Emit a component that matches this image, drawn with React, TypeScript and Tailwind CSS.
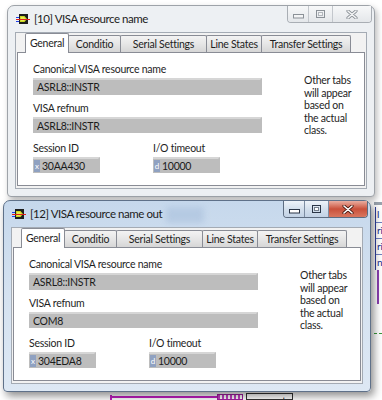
import React from "react";

type WinProps = {
  active?: boolean;
  title: string;
  refnum: string;
  session: string;
};

function LvIcon() {
  return (
    <svg width="14" height="10" viewBox="0 0 14 10" className="shrink-0">
      <rect x="3" y="0" width="9" height="10" fill="#1d1d1d" />
      <path d="M4 2 H8.5 L11 5 L8.5 8 H4 Z" fill="#c9d622" />
      <path d="M5 3 H8 L9.5 5 L8 7 H5 Z" fill="#e8ec50" />
      <line x1="0" y1="5.5" x2="14" y2="5.5" stroke="#e0201c" strokeWidth="1" />
      <line x1="0" y1="3.5" x2="3" y2="3.5" stroke="#2040e8" strokeWidth="1" />
      <line x1="0" y1="7.5" x2="3" y2="7.5" stroke="#2040e8" strokeWidth="1" />
    </svg>
  );
}

function TitleButtons({ active }: { active?: boolean }) {
  const stroke = active ? "#2a3546" : "#8b9197";
  const fill = active ? "#ffffff" : "#f3f4f5";
  return (
    <div
      className={`absolute right-[2px] top-0 flex h-[17px] overflow-hidden rounded-b-[4px] border border-t-0 ${
        active ? "border-[#5d6c80]" : "border-[#a9aeb4]"
      }`}
    >
      <div
        className={`flex w-[21px] items-center justify-center border-r ${
          active
            ? "border-[#7d8da2] bg-gradient-to-b from-[#eef3f9] via-[#d3dfec] to-[#c2d2e5]"
            : "border-[#c3c7cc] bg-gradient-to-b from-[#f7f8f9] to-[#e4e7ea]"
        }`}
      >
        <svg width="11" height="5" viewBox="0 0 11 5" className="mt-[4px]">
          <rect x="0.5" y="0.5" width="10" height="3.5" fill={fill} stroke={stroke} />
        </svg>
      </div>
      <div
        className={`flex w-[24px] items-center justify-center border-r ${
          active
            ? "border-[#7d8da2] bg-gradient-to-b from-[#eef3f9] via-[#d3dfec] to-[#c2d2e5]"
            : "border-[#c3c7cc] bg-gradient-to-b from-[#f7f8f9] to-[#e4e7ea]"
        }`}
      >
        <svg width="9" height="8" viewBox="0 0 9 8">
          <rect x="0.5" y="0.5" width="8" height="7" fill="none" stroke={stroke} />
          <rect x="2.5" y="2.5" width="4" height="3" fill={fill} stroke={stroke} strokeOpacity="0.6" />
        </svg>
      </div>
      <div
        className={`flex w-[38px] items-center justify-center ${
          active
            ? "bg-gradient-to-b from-[#e9ada0] via-[#c9503b] to-[#d9765e]"
            : "bg-gradient-to-b from-[#f7f8f9] to-[#e4e7ea]"
        }`}
      >
        <svg width="12" height="9" viewBox="0 0 12 9">
          <path
            d="M2 1 L10 8 M10 1 L2 8"
            stroke={active ? "#4a1a12" : "#8b9197"}
            strokeWidth="3.2"
            strokeLinecap="round"
          />
          <path
            d="M2 1 L10 8 M10 1 L2 8"
            stroke={active ? "#ffffff" : "#f3f4f5"}
            strokeWidth="1.6"
            strokeLinecap="round"
          />
        </svg>
      </div>
    </div>
  );
}

function Field({ text, h, w }: { text: string; h: string; w: string }) {
  return (
    <div
      className={`flex items-center border-t-2 border-r-2 border-t-[#d6d6d6] border-r-transparent bg-[#bdbdbd] pl-[4px] text-[10.5px] leading-none text-[#1b1b1b] ${h} ${w}`}
    >
      {text}
    </div>
  );
}

function NumField({ radix, text }: { radix: string; text: string }) {
  return (
    <div className="flex h-[16px] w-[67px] items-center border-t-2 border-r-2 border-t-[#d6d6d6] border-r-transparent bg-[#bdbdbd] text-[10.5px] leading-none text-[#1b1b1b]">
      <span className="ml-[1px] flex h-[12px] w-[6px] items-center justify-center bg-[#8fa1c1] text-[8px] leading-none tracking-normal text-white">
        {radix}
      </span>
      <span className="ml-[2px]">{text}</span>
    </div>
  );
}

const tabs = [
  { label: "Conditio", w: "w-[53px]" },
  { label: "Serial Settings", w: "w-[87px]" },
  { label: "Line States", w: "w-[56px]" },
  { label: "Transfer Settings", w: "w-[90px]" },
];

function Win({ active, title, refnum, session }: WinProps) {
  return (
    <div
      className={`relative flex h-[192px] w-[368px] flex-col rounded-t-[7px] rounded-b-[4px] border ${
        active
          ? "border-[#5f7189] bg-gradient-to-b from-[#c6d8ec] via-[#d5e2f0] to-[#dde8f4] shadow-[3px_4px_8px_rgba(0,0,0,0.45)]"
          : "border-[#9ea3a9] bg-[#edf0f3] shadow-[2px_3px_6px_rgba(0,0,0,0.28)]"
      }`}
    >
      <div className="relative flex h-[26px] shrink-0 items-center pl-2">
        {active && (
          <div className="absolute left-[162px] top-[6px] h-[16px] w-[38px] bg-[#a9c0dc] opacity-60 blur-[3px]" />
        )}
        <LvIcon />
        <span className="relative ml-[4px] text-[11.5px] leading-none tracking-[-0.45px] text-[#1c1c1c]">
          {title}
        </span>
        <TitleButtons active={active} />
      </div>
      <div className="mx-[7px] mb-[7px] flex-1 border border-[#a4abb4] bg-[#f2f2f2]">
        <div className="flex h-[19px] items-end pl-[9px]">
          <div className="relative z-10 -mb-px flex h-[20px] w-[44px] items-center justify-center rounded-t-[2px] border border-b-0 border-[#898c95] bg-white leading-none">
            General
          </div>
          {tabs.map((t) => (
            <div
              key={t.label}
              className={`-ml-px flex h-[17px] items-center justify-center rounded-t-[2px] border border-b-0 border-[#898c95] bg-gradient-to-b from-[#f3f3f3] via-[#e6e6e6] to-[#d6d6d6] leading-none ${t.w}`}
            >
              {t.label}
            </div>
          ))}
        </div>
        <div className="mx-[1px] flex h-[134px] items-start border border-[#898c95] bg-white pl-[15px] pt-[9px]">
          <div className="flex w-[229px] flex-col">
            <div className="h-[14px] leading-[14px]">Canonical VISA resource name</div>
            <div className="mt-[2px]">
              <Field text="ASRL8::INSTR" h="h-[17px]" w="w-[229px]" />
            </div>
            <div className="mt-[6px] h-[14px] leading-[14px]">VISA refnum</div>
            <div className="mt-[2px]">
              <Field text={refnum} h="h-[16px]" w="w-[229px]" />
            </div>
            <div className="mt-[8px] flex gap-[53px]">
              <div className="flex flex-col">
                <div className="h-[14px] leading-[14px]">Session ID</div>
                <div className="mt-[2px]">
                  <NumField radix="x" text={session} />
                </div>
              </div>
              <div className="flex flex-col">
                <div className="h-[14px] leading-[14px]">I/O timeout</div>
                <div className="mt-[2px]">
                  <NumField radix="d" text="10000" />
                </div>
              </div>
            </div>
          </div>
          <div className="ml-[42px] mt-[12px] w-[56px] leading-[12.5px]">
            Other tabs will appear based on the actual class.
          </div>
        </div>
      </div>
    </div>
  );
}

function Diagram() {
  return (
    <div className="absolute inset-0 z-0">
      <div className="absolute left-[374px] top-[202px] h-[3px] w-[8px] bg-[#9aa3ad]" />
      <div className="absolute left-[375px] top-[207px] flex w-[7px] flex-col overflow-hidden border-l border-[#3040a0] text-[10px] leading-[15px] text-[#1a2a8a]">
        <span className="border-b border-[#7080c0] pl-[1px]">l</span>
        <span className="border-b border-[#7080c0] pl-[1px]">ri</span>
        <span className="border-b border-[#7080c0] pl-[1px]">ri</span>
        <span className="pl-[1px]">n</span>
      </div>
      <div className="absolute left-[377px] top-[270px] h-[34px] w-[2px] bg-[#8a3fb0]" />
      <div className="absolute left-[374px] top-[333px] w-[8px] border-t border-dashed border-[#3a9a3a]" />
      <div className="absolute left-[110px] top-[395px] h-[5px] w-[2px] bg-[#c020c0]" />
      <div className="absolute left-[110px] top-[396px] h-[2px] w-[107px] bg-[#c020c0]" />
      <div className="absolute left-[217px] top-[394px] h-[6px] w-[26px] border border-[#a020a0] bg-[repeating-linear-gradient(90deg,#c040c0_0_2px,#ffffff_2px_4px)]" />
      <div className="absolute left-[246px] top-[393px] h-[7px] w-[47px] overflow-hidden border border-[#333] bg-white pl-[2px] text-[10px] leading-[12px] text-black">
        error out 2
      </div>
    </div>
  );
}

export default function App() {
  return (
    <div className="relative h-[400px] w-[382px] overflow-hidden bg-white font-['Lato','Liberation_Sans',sans-serif] text-[10.5px] tracking-[-0.25px] text-[#1e1e1e]">
      <Diagram />
      <div className="relative z-10 flex flex-col">
        <div className="ml-[7px] mt-[5px]">
          <Win title="[10] VISA resource name" refnum="ASRL8::INSTR" session="30AA430" />
        </div>
        <div className="ml-[3px] mt-[3px]">
          <Win active title="[12] VISA resource name out" refnum="COM8" session="304EDA8" />
        </div>
      </div>
    </div>
  );
}
